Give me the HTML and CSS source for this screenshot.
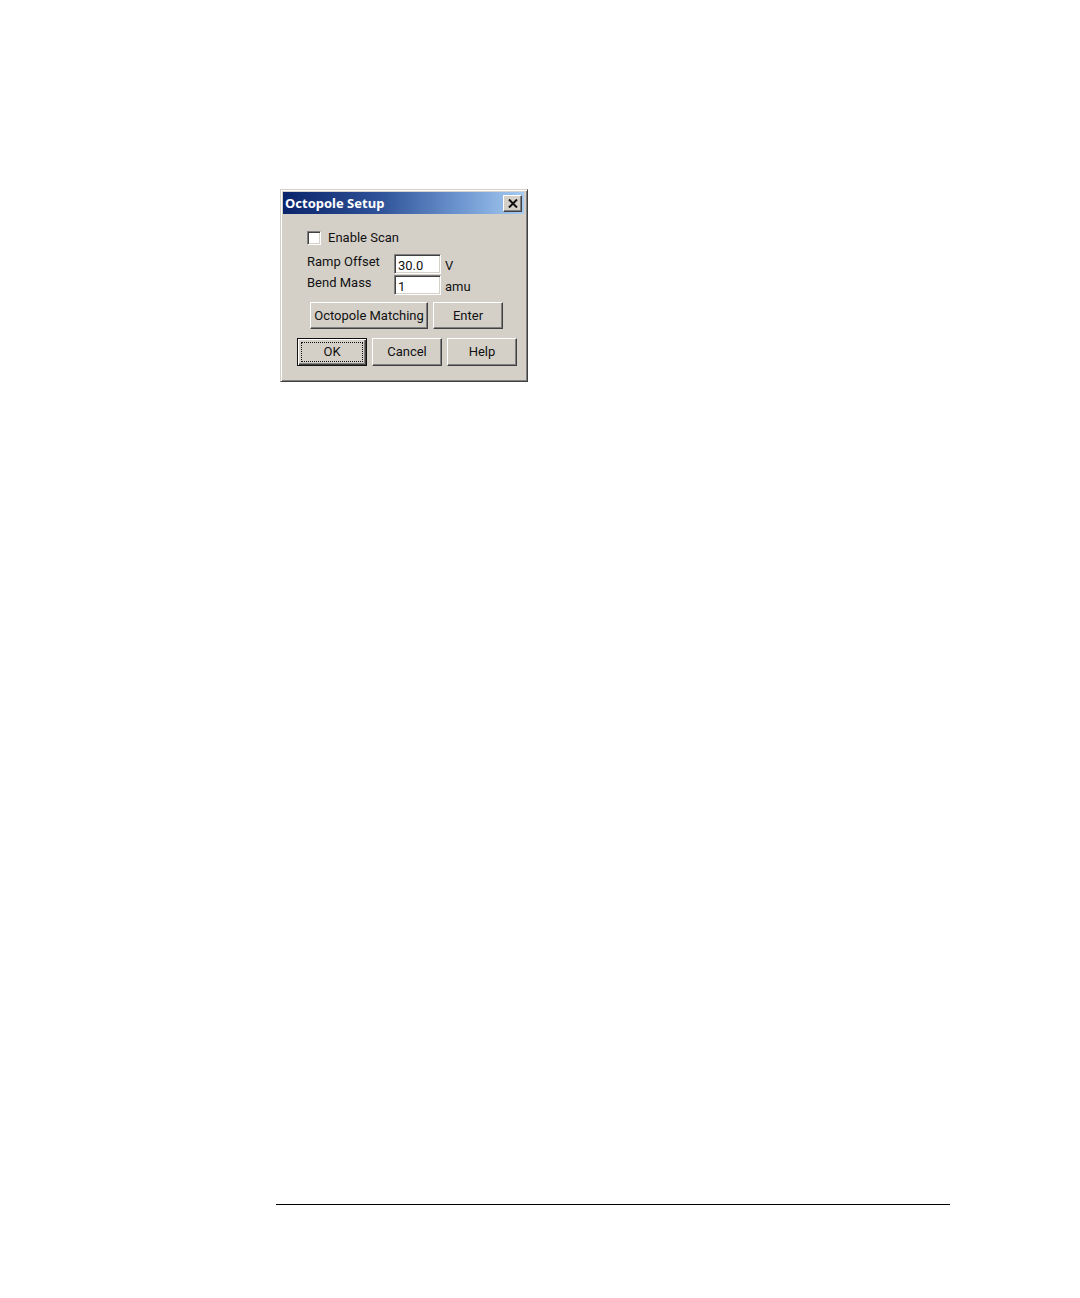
FILE: index.html
```html
<!DOCTYPE html>
<html lang="en">
<head>
<meta charset="utf-8">
<title>Octopole Setup</title>
<link rel="stylesheet" href="styles.css">
</head>
<body>
<main class="page">
  <form class="dialog" role="dialog" aria-labelledby="dialog-title">
    <header class="titlebar">
      <h1 class="title" id="dialog-title">Octopole Setup</h1>
      <button class="close" type="button" aria-label="Close">
        <svg width="10" height="9" viewBox="0 0 10 9" aria-hidden="true"><path d="M1 0.5L9 8.5M9 0.5L1 8.5" stroke="#111" stroke-width="2" fill="none"/></svg>
      </button>
    </header>
    <div class="content">
      <div class="scan">
        <input class="check" type="checkbox" id="scan">
        <label for="scan">Enable Scan</label>
      </div>
      <div class="fields">
        <label for="ramp">Ramp Offset</label>
        <input class="field" type="text" id="ramp" value="30.0">
        <span class="unit">V</span>
        <label for="bend">Bend Mass</label>
        <input class="field" type="text" id="bend" value="1">
        <span class="unit">amu</span>
      </div>
      <div class="actions">
        <button class="button wide" type="button">Octopole Matching</button>
        <button class="button" type="button">Enter</button>
      </div>
      <div class="choices">
        <button class="button default" type="button"><span class="focus">OK</span></button>
        <button class="button" type="button">Cancel</button>
        <button class="button" type="button">Help</button>
      </div>
    </div>
  </form>
  <hr class="rule">
</main>
</body>
</html>
```
FILE: styles.css
```css
* {
  box-sizing: border-box;
}

body {
  margin: 0;
  background: #fff;
  color: #111;
  font: 13px/16px Roboto, "Liberation Sans", Arial, sans-serif;
}

.page {
  min-height: 100vh;
  display: flex;
  flex-direction: column;
  justify-content: space-between;
  padding: 189px 130px 93px 276px;
}

.dialog {
  width: 248px;
  margin-left: 4px;
  padding: 1px;
  background: #d4d0c8;
  border: 1px solid;
  border-color: #d4d0c8 #404040 #404040 #d4d0c8;
  box-shadow: inset 1px 1px #fff, inset -1px -1px #808080;
}

.titlebar {
  display: flex;
  align-items: center;
  justify-content: space-between;
  height: 22px;
  margin: 1px 2px 0 1px;
  padding: 0 2px;
  background: linear-gradient(to right, #0a246a, #2f5298 40%, #7099d2 75%, #a6caf0);
}

.title {
  margin: 0;
  color: #fff;
  font: bold 13px/16px "Noto Sans", Tahoma, sans-serif;
}

.close,
.button {
  padding: 0;
  background: #d4d0c8;
  color: #111;
  font: inherit;
  border: 1px solid;
  border-color: #fff #404040 #404040 #fff;
  box-shadow: inset -1px -1px #808080;
}

.close {
  display: grid;
  place-items: center;
  width: 19px;
  height: 17px;
}

.content {
  padding: 16px 7px 14px 15px;
}

.scan {
  display: flex;
  align-items: center;
  gap: 7px;
  padding-left: 10px;
}

.check,
.field {
  appearance: none;
  margin: 0;
  background: #fff;
  border: 1px solid;
  border-color: #808080 #fff #fff #808080;
  box-shadow: inset 1px 1px #404040, inset -1px -1px #d4d0c8;
}

.check {
  width: 14px;
  height: 14px;
}

.check:checked {
  background: #111 content-box;
  padding: 3px;
}

.fields {
  display: grid;
  grid-template-columns: 83px 47px 1fr;
  column-gap: 4px;
  row-gap: 1px;
  padding: 8px 0 0 10px;
}

.field {
  width: 100%;
  height: 20px;
  padding: 2px 3px 0;
  color: #111;
  font: inherit;
}

.unit {
  align-self: end;
}

.actions,
.choices {
  display: flex;
  gap: 5px;
}

.actions {
  padding: 7px 0 0 13px;
}

.choices {
  padding-top: 9px;
}

.button {
  width: 70px;
  height: 28px;
}

.actions .button {
  height: 27px;
}

.actions .wide {
  width: 118px;
}

.default {
  padding: 2px;
  border-color: #111;
  box-shadow: inset 1px 1px #fff, inset -1px -1px #404040, inset -2px -2px #808080;
}

.focus {
  display: grid;
  place-items: center;
  height: 20px;
  margin: 0 1px;
  border: 1px dotted #111;
}

.rule {
  width: 100%;
  margin: 0;
  border: 0;
  border-top: 1px solid #000;
}
```
